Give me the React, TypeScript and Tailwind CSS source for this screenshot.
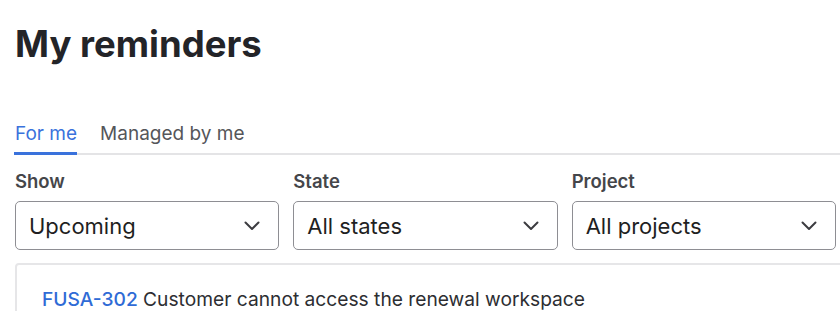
import React from "react";

function Chevron() {
  return (
    <svg width="16" height="10" viewBox="0 0 16 10" fill="none" className="shrink-0">
      <path d="M1.5 1.5L8 8l6.5-6.5" stroke="#3c3c40" strokeWidth="2" strokeLinecap="round" strokeLinejoin="round" />
    </svg>
  );
}

function Field({ label, value }: { label: string; value: string }) {
  return (
    <div className="flex flex-col">
      <div className="text-[18.5px] leading-[24px] font-semibold text-[#45464a]">{label}</div>
      <div className="mt-[8px] h-[49px] rounded-[5px] border-[1.5px] border-[#8e8e93] bg-white flex items-center justify-between pl-[13px] pr-[18px]">
        <span className="text-[22px] leading-[28px] text-[#1f1f22]">{value}</span>
        <Chevron />
      </div>
    </div>
  );
}

export default function App() {
  return (
    <div className="w-[840px] h-[311px] overflow-hidden bg-white" style={{ fontFamily: "Inter, 'Noto Sans', sans-serif" }}>
      <div className="w-[851px]">
        <h1 className="pt-[24px] pl-[15px] text-[36.5px] leading-[40px] font-bold text-[#232428]">My reminders</h1>
        <div className="mt-[58px] ml-[14px] flex gap-[23px] border-b-2 border-[#e4e4e6]">
          <div className="-mb-[2px] border-b-[3px] border-[#3a72dc] pb-[6px] pl-[1px] text-[19px] leading-[24px] text-[#3a72dc]">For me</div>
          <div className="pb-[6px] text-[19px] leading-[24px] text-[#55565a]">Managed by me</div>
        </div>
        <div className="px-[15px] mt-[14px] grid grid-cols-3 gap-[14px]">
          <Field label="Show" value="Upcoming" />
          <Field label="State" value="All states" />
          <Field label="Project" value="All projects" />
        </div>
        <div className="ml-[15px] mt-[13px] border-2 border-[#e6e6e8] rounded-[4px] pl-[25px] pt-[22px] pb-[20px]">
          <div className="text-[19.2px] leading-[24px] text-[#2d2e32]">
            <span className="text-[#2f6bd6] font-medium">FUSA-302</span> Customer cannot access the renewal workspace
          </div>
        </div>
      </div>
    </div>
  );
}
